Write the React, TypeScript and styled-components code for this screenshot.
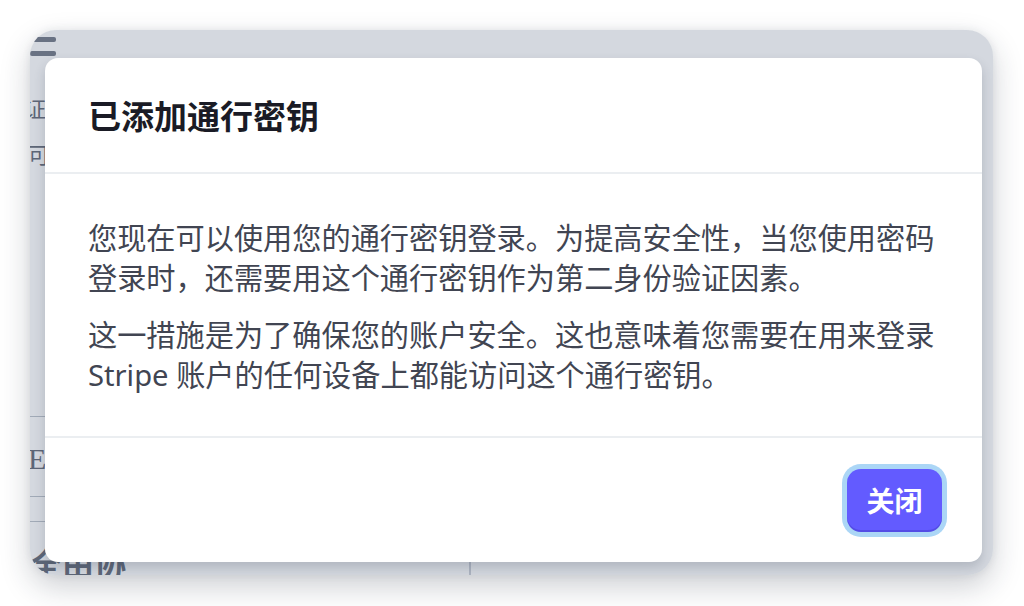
import styled, { createGlobalStyle } from 'styled-components';

const GlobalStyle = createGlobalStyle`
  html, body {
    margin: 0;
    padding: 0;
    background: #ffffff;
  }
  * {
    box-sizing: border-box;
  }
`;

const Stage = styled.div`
  width: 1024px;
  height: 606px;
  padding: 30px 31px 31px 30px;
  background: #ffffff;
`;

const Frame = styled.div`
  position: relative;
  width: 100%;
  height: 100%;
  border-radius: 26px;
  overflow: hidden;
  background: #ffffff;
  box-shadow: 0 12px 30px rgba(30, 40, 60, 0.22), 0 0 8px rgba(30, 40, 60, 0.08);
`;

// the page that sits behind the dialog
const UnderPage = styled.div`
  display: grid;
  grid-template-columns: 439px 1fr;
  height: 100%;
  font-family: 'Noto Sans', 'Noto Sans CJK SC', sans-serif;
  color: #5b6270;
`;

const SideColumn = styled.div`
  display: flex;
  flex-direction: column;
  padding-top: 5px;
`;

const MainColumn = styled.div`
  margin-top: 380px;
  border-left: 2px solid #c9ced6;
`;

const Bar = styled.div<{ $gap: number }>`
  width: 26px;
  height: 5px;
  border-radius: 2px;
  background: #6b7280;
  margin-top: ${p => p.$gap}px;
`;

const GhostText = styled.div<{ $top: number; $indent: number; $size: number; $bold?: boolean; $serif?: boolean }>`
  margin-top: ${p => p.$top}px;
  margin-left: ${p => p.$indent}px;
  font-size: ${p => p.$size}px;
  line-height: 1;
  white-space: nowrap;
  font-weight: ${p => (p.$bold ? 700 : 400)};
  font-family: ${p => (p.$serif ? "'Liberation Serif', serif" : "'Noto Sans CJK SC', sans-serif")};
`;

const Rule = styled.div<{ $top: number }>`
  margin-top: ${p => p.$top}px;
  height: 1px;
  background: #b9bfc8;
`;

const Overlay = styled.div`
  position: absolute;
  inset: 0;
  display: flex;
  padding: 28px 11px 13px 15px;
  background: rgba(100, 116, 139, 0.28);
`;

const Dialog = styled.div`
  flex: 1;
  display: flex;
  flex-direction: column;
  background: #ffffff;
  border-radius: 13px;
  box-shadow: 0 6px 12px rgba(40, 50, 70, 0.2);
  font-family: 'Noto Sans', 'Noto Sans CJK SC', sans-serif;
`;

const DialogHeader = styled.header`
  display: flex;
  align-items: center;
  height: 116px;
  padding: 0 43px;
  border-bottom: 2px solid #ebeef1;
`;

const DialogTitle = styled.h2`
  margin: 0;
  font-size: 33px;
  font-weight: 700;
  color: #1a1b25;
`;

const DialogBody = styled.div`
  flex: 1;
  padding: 44px 43px 0;
`;

const Paragraph = styled.p`
  margin: 0 0 17px;
  font-size: 29.2px;
  line-height: 40px;
  color: #414552;
`;

const DialogFooter = styled.footer`
  display: flex;
  justify-content: flex-end;
  align-items: center;
  height: 126px;
  padding: 0 40px;
  border-top: 2px solid #ebeef1;
`;

const PrimaryButton = styled.button`
  width: 95px;
  height: 63px;
  border: none;
  border-radius: 14px;
  background: #635bff;
  color: #ffffff;
  font-family: 'Noto Sans CJK SC', sans-serif;
  font-size: 28px;
  font-weight: 700;
  cursor: pointer;
  box-shadow: 0 0 0 5px #abd6f6, inset 0 -2px 0 rgba(40, 30, 150, 0.25);
`;

const App = () => {
  return (
    <>
      <GlobalStyle />
      <Stage>
        <Frame>
          <UnderPage>
            <SideColumn>
              <Bar $gap={2} />
              <Bar $gap={9} />
              <GhostText $top={40} $indent={-28} $size={22}>验证</GhostText>
              <GhostText $top={24} $indent={-2} $size={22}>可</GhostText>
              <Rule $top={252} />
              <GhostText $top={27} $indent={-2} $size={30} $serif>E</GhostText>
              <Rule $top={22} />
              <Rule $top={24} />
              <GhostText $top={24} $indent={0} $size={32} $bold>全由协</GhostText>
            </SideColumn>
            <MainColumn />
          </UnderPage>
          <Overlay>
            <Dialog>
              <DialogHeader>
                <DialogTitle>已添加通行密钥</DialogTitle>
              </DialogHeader>
              <DialogBody>
                <Paragraph>
                  您现在可以使用您的通行密钥登录。为提高安全性，当您使用密码登录时，还需要用这个通行密钥作为第二身份验证因素。
                </Paragraph>
                <Paragraph>
                  这一措施是为了确保您的账户安全。这也意味着您需要在用来登录 Stripe 账户的任何设备上都能访问这个通行密钥。
                </Paragraph>
              </DialogBody>
              <DialogFooter>
                <PrimaryButton>关闭</PrimaryButton>
              </DialogFooter>
            </Dialog>
          </Overlay>
        </Frame>
      </Stage>
    </>
  );
};

export default App;
